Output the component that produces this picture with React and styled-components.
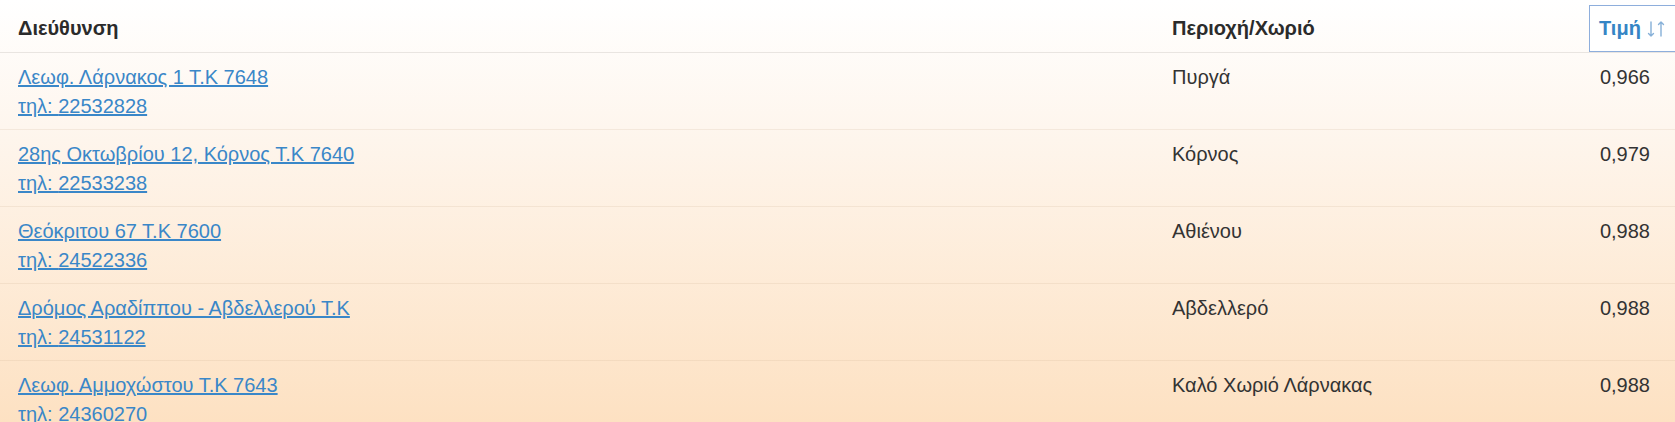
import React from 'react'
import styled, { createGlobalStyle } from 'styled-components'

const GlobalStyle = createGlobalStyle`
  html, body {
    margin: 0;
    padding: 0;
    overflow: hidden;
  }
  body {
    font-family: "Liberation Sans", Arial, sans-serif;
    color: #333;
  }
`

const stations = [
    { address: 'Λεωφ. Λάρνακος 1 Τ.Κ 7648', phone: '22532828', region: 'Πυργά', price: '0,966' },
    { address: '28ης Οκτωβρίου 12, Κόρνος Τ.Κ 7640', phone: '22533238', region: 'Κόρνος', price: '0,979' },
    { address: 'Θεόκριτου 67 Τ.Κ 7600', phone: '24522336', region: 'Αθιένου', price: '0,988' },
    { address: 'Δρόμος Αραδίππου - Αβδελλερού Τ.Κ', phone: '24531122', region: 'Αβδελλερό', price: '0,988' },
    { address: 'Λεωφ. Αμμοχώστου Τ.Κ 7643', phone: '24360270', region: 'Καλό Χωριό Λάρνακας', price: '0,988' },
]

function SortIcon() {
    return (
        <svg width="19" height="20" viewBox="0 0 19 20" fill="none" stroke="#86b0d8" strokeWidth="1.4" strokeLinecap="round" strokeLinejoin="round">
            <path d="M4 3v14M1.5 14.5L4 17l2.5-2.5" />
            <path d="M14 17V3M11.5 5.5L14 3l2.5 2.5" />
        </svg>
    )
}

function App() {
    return (
        <Page>
            <GlobalStyle />
            <Table>
                <colgroup>
                    <col style={{ width: 1154 }} />
                    <col style={{ width: 435 }} />
                    <col style={{ width: 91 }} />
                </colgroup>
                <thead>
                    <tr>
                        <HeadCell>Διεύθυνση</HeadCell>
                        <HeadCell>Περιοχή/Χωριό</HeadCell>
                        <SortCell>
                            <SortButton>
                                Τιμή <SortIcon />
                            </SortButton>
                        </SortCell>
                    </tr>
                </thead>
                <tbody>
                    {stations.map((s) => (
                        <Row key={s.phone}>
                            <Cell>
                                <Link href="#">{s.address}</Link>
                                <br />
                                <Link href="#">τηλ: {s.phone}</Link>
                            </Cell>
                            <Cell>{s.region}</Cell>
                            <PriceCell>{s.price}</PriceCell>
                        </Row>
                    ))}
                </tbody>
            </Table>
        </Page>
    )
}

export default App

const Page = styled.div`
height: 422px;
overflow: hidden;
background: linear-gradient(to bottom, #ffffff 0%, #fef6ee 30%, #fde1c2 100%);
`

const Table = styled.table`
width: 1680px;
table-layout: fixed;
border-collapse: collapse;
font-size: 20px;
line-height: 29px;
`

const HeadCell = styled.th`
text-align: left;
font-weight: bold;
font-size: 20px;
color: #2b2b2b;
padding: 13px 0 9px 18px;
height: 29px;
border-bottom: 1px solid #e9e5e1;
`

const SortCell = styled.th`
padding: 0;
vertical-align: bottom;
border-bottom: 1px solid #e9e5e1;
`

const SortButton = styled.div`
display: flex;
align-items: center;
gap: 6px;
height: 45px;
margin-top: 5px;
padding-left: 9px;
border: 1px solid #8eaedc;
background: #fff;
color: #3585c5;
font-weight: bold;
font-size: 20px;
`

const Row = styled.tr`
border-bottom: 1px solid rgba(200, 170, 140, 0.18);
`

const Cell = styled.td`
vertical-align: top;
padding: 10px 0 8px 18px;
height: 58px;
`

const PriceCell = styled.td`
vertical-align: top;
text-align: right;
padding: 10px 30px 8px 0;
`

const Link = styled.a`
color: #3a87c8;
text-decoration: underline;
`
